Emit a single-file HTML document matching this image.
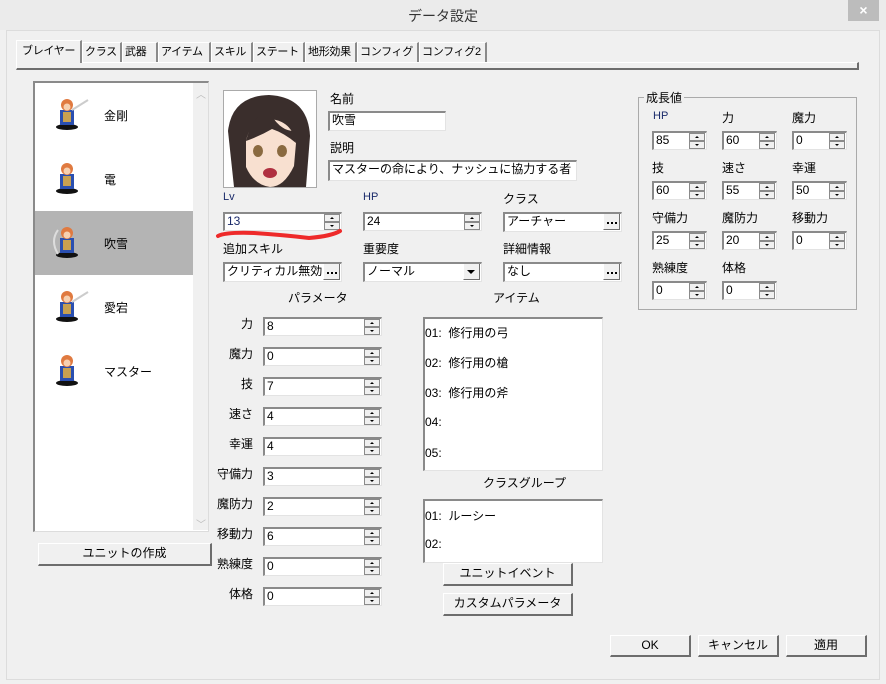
<!DOCTYPE html>
<html><head><meta charset="utf-8">
<style>
*{box-sizing:border-box;margin:0;padding:0}
body{width:886px;height:684px;background:#f0f0f0;position:relative;overflow:hidden;font-family:"Liberation Sans","Noto Sans CJK JP",sans-serif;font-size:12px;color:#000}
.a{position:absolute;white-space:nowrap}
.in{position:absolute;background:#fff;border-top:2px solid #8a8a8a;border-left:2px solid #8a8a8a;border-right:1px solid #e3e3e3;border-bottom:1px solid #e3e3e3;font-size:12px;line-height:15px;padding-left:2px;height:19px;white-space:nowrap;overflow:hidden}
.sp{position:absolute;right:1px;top:0;width:16px;height:16px}
.sp i{display:block;height:8px;border:1px solid #8a8a8a;background:#f0f0f0;position:relative}
.sp i:after{content:"";position:absolute;left:5px;top:2px;border-left:2px solid transparent;border-right:2px solid transparent}
.sp i.u:after{border-bottom:2px solid #000}
.sp i.d:after{border-top:2px solid #000}
.dot{position:absolute;right:1px;top:0;width:17px;height:16px;background:#f0f0f0;border-right:1px solid #6d6d6d;border-bottom:1px solid #6d6d6d;border-left:1px solid #fff;font-size:9px;line-height:15px;text-align:center}
.btn{position:absolute;background:#f0f0f0;border-top:1px solid #fff;border-left:1px solid #fff;border-right:2px solid #6d6d6d;border-bottom:2px solid #6d6d6d;text-align:center;font-size:12px;line-height:19px;white-space:nowrap}
.tab{position:absolute;top:42px;height:20px;border-top:1px solid #fff;border-left:1px solid #fff;border-right:2px solid #8a8a8a;font-size:11px;line-height:18px;padding-left:2px;white-space:nowrap;overflow:hidden;letter-spacing:-0.3px}
.lbl{position:absolute;font-size:12px;text-align:right;width:40px}
.hl{color:#1a2a6a}
</style></head><body>
<div class="a" style="left:0;top:0;width:886px;height:30px;background:#ebebeb"></div>
<div class="a" style="left:0;top:15px;width:886px;text-align:center;font-size:14px;line-height:2px;color:#333">データ設定</div>
<div class="a" style="left:848px;top:0;width:31px;height:21px;background:#bcbcbc;color:#fff;font-size:14px;text-align:center;line-height:21px;font-weight:bold">×</div>
<div class="a" style="left:6px;top:30px;width:874px;height:650px;border:1px solid #dcdcdc"></div>

<!-- tabs -->
<div class="a" style="left:16px;top:62px;width:843px;height:8px;border-top:1px solid #fff;border-bottom:2px solid #6d6d6d;border-right:2px solid #6d6d6d;border-left:1px solid #fff"></div>
<div class="tab" style="left:16px;top:40px;height:23px;width:66px;background:#f0f0f0;line-height:20px;padding-left:5px">ブレイヤー</div>
<div class="tab" style="left:82px;width:40px">クラス</div>
<div class="tab" style="left:122px;width:36px">武器</div>
<div class="tab" style="left:158px;width:53px">アイテム</div>
<div class="tab" style="left:211px;width:42px">スキル</div>
<div class="tab" style="left:253px;width:52px">ステート</div>
<div class="tab" style="left:305px;width:52px">地形効果</div>
<div class="tab" style="left:357px;width:62px">コンフィグ</div>
<div class="tab" style="left:419px;width:68px">コンフィグ2</div>

<!-- list -->
<div class="a" style="left:33px;top:81px;width:176px;height:451px;background:#fff;border-top:2px solid #8a8a8a;border-left:2px solid #8a8a8a;border-right:1px solid #dcdcdc;border-bottom:1px solid #dcdcdc"></div>
<div class="a" style="left:193px;top:83px;width:15px;height:447px;background:#f0f0f0"></div>
<div class="a" style="left:196px;top:86px;color:#bbb;font-size:10px">︿</div>
<div class="a" style="left:196px;top:516px;color:#bbb;font-size:10px">﹀</div>
<div class="a" style="left:35px;top:211px;width:158px;height:64px;background:#b4b4b4"></div>
<svg class="a" style="left:50px;top:96px" width="40" height="300" viewBox="0 0 40 300">
<g id="s"><ellipse cx="17" cy="31" rx="11" ry="3" fill="#111"/><rect x="10" y="14" width="14" height="15" fill="#2a4fb0"/><rect x="13" y="16" width="8" height="10" fill="#c8a050"/><circle cx="17" cy="9" r="6" fill="#e07a40"/><circle cx="17" cy="11" r="3.5" fill="#f6d0b0"/></g>
<line x1="22" y1="14" x2="38" y2="4" stroke="#ccc" stroke-width="2"/>
<use href="#s" y="64"/><use href="#s" y="128"/><use href="#s" y="192"/><use href="#s" y="256"/>
<path d="M8 134 Q0 145 8 158" stroke="#ddd" stroke-width="2" fill="none"/>
<line x1="22" y1="206" x2="38" y2="196" stroke="#ccc" stroke-width="2"/>
</svg>
<div class="a" style="left:104px;top:107px">金剛</div>
<div class="a" style="left:104px;top:171px">電</div>
<div class="a" style="left:104px;top:235px">吹雪</div>
<div class="a" style="left:104px;top:299px">愛宕</div>
<div class="a" style="left:104px;top:363px">マスター</div>
<div class="btn" style="left:38px;top:543px;width:174px;height:23px">ユニットの作成</div>

<!-- portrait -->
<div class="a" style="left:223px;top:90px;width:94px;height:98px;border:1px solid #aaa;background:#fff;overflow:hidden">
<svg width="92" height="96" viewBox="0 0 92 96"><path d="M10 96 L4 40 Q8 5 45 4 Q84 6 86 45 L82 96 Z" fill="#3a2e2c"/><path d="M22 50 Q26 30 46 28 Q68 30 72 52 L70 75 Q60 96 46 96 Q30 94 22 76 Z" fill="#f8e0d0"/><ellipse cx="34" cy="60" rx="5" ry="6" fill="#8a6a40"/><ellipse cx="58" cy="60" rx="5" ry="6" fill="#8a6a40"/><ellipse cx="46" cy="82" rx="7" ry="5" fill="#b03040"/><path d="M22 50 Q30 20 46 22 Q56 40 70 40 L72 52 Q60 42 48 38 Q36 45 22 50Z" fill="#3a2e2c"/></svg></div>
<div class="a" style="left:330px;top:90px">名前</div>
<div class="in" style="left:328px;top:111px;width:118px;height:20px">吹雪</div>
<div class="a" style="left:330px;top:139px">説明</div>
<div class="in" style="left:328px;top:160px;width:249px;height:21px">マスターの命により、ナッシュに協力する者</div>

<div class="a hl" style="left:223px;top:191px;font-size:11px">Lv</div>
<div class="in" style="left:223px;top:212px;width:119px;color:#1a2a6a">13<div class="sp"><i class="u"></i><i class="d"></i></div></div>
<div class="a hl" style="left:363px;top:191px;font-size:11px">HP</div>
<div class="in" style="left:363px;top:212px;width:119px">24<div class="sp"><i class="u"></i><i class="d"></i></div></div>
<div class="a" style="left:503px;top:190px">クラス</div>
<div class="in" style="left:503px;top:212px;width:119px;height:20px">アーチャー<div class="dot"><svg width="13" height="14"><rect x="2" y="8" width="2" height="2"/><rect x="6" y="8" width="2" height="2"/><rect x="10" y="8" width="2" height="2"/></svg></div></div>
<svg class="a" style="left:214px;top:226px" width="132" height="16"><path d="M4 10 Q12 6 40 7 Q70 9 95 12 Q118 10 126 5" stroke="#ee2a2a" stroke-width="4" fill="none" stroke-linecap="round"/></svg>
<div class="a" style="left:223px;top:240px">追加スキル</div>
<div class="in" style="left:223px;top:262px;width:119px;height:20px">クリティカル無効<div class="dot"><svg width="13" height="14"><rect x="2" y="8" width="2" height="2"/><rect x="6" y="8" width="2" height="2"/><rect x="10" y="8" width="2" height="2"/></svg></div></div>
<div class="a" style="left:363px;top:240px">重要度</div>
<div class="in" style="left:363px;top:262px;width:119px;height:20px">ノーマル<div class="dot"><svg width="13" height="14"><path d="M2 6 L10 6 L6 10Z"/></svg></div></div>
<div class="a" style="left:503px;top:240px">詳細情報</div>
<div class="in" style="left:503px;top:262px;width:119px;height:20px">なし<div class="dot"><svg width="13" height="14"><rect x="2" y="8" width="2" height="2"/><rect x="6" y="8" width="2" height="2"/><rect x="10" y="8" width="2" height="2"/></svg></div></div>

<div class="a" style="left:288px;top:289px">パラメータ</div>
<div class="a" style="left:493px;top:289px">アイテム</div>

<div class="lbl" style="left:213px;top:315px">力</div>
<div class="lbl" style="left:213px;top:345px">魔力</div>
<div class="lbl" style="left:213px;top:375px">技</div>
<div class="lbl" style="left:213px;top:405px">速さ</div>
<div class="lbl" style="left:213px;top:435px">幸運</div>
<div class="lbl" style="left:213px;top:465px">守備力</div>
<div class="lbl" style="left:213px;top:495px">魔防力</div>
<div class="lbl" style="left:213px;top:525px">移動力</div>
<div class="lbl" style="left:213px;top:555px">熟練度</div>
<div class="lbl" style="left:213px;top:585px">体格</div>
<div class="in" style="left:263px;top:317px;width:119px">8<div class="sp"><i class="u"></i><i class="d"></i></div></div>
<div class="in" style="left:263px;top:347px;width:119px">0<div class="sp"><i class="u"></i><i class="d"></i></div></div>
<div class="in" style="left:263px;top:377px;width:119px">7<div class="sp"><i class="u"></i><i class="d"></i></div></div>
<div class="in" style="left:263px;top:407px;width:119px">4<div class="sp"><i class="u"></i><i class="d"></i></div></div>
<div class="in" style="left:263px;top:437px;width:119px">4<div class="sp"><i class="u"></i><i class="d"></i></div></div>
<div class="in" style="left:263px;top:467px;width:119px">3<div class="sp"><i class="u"></i><i class="d"></i></div></div>
<div class="in" style="left:263px;top:497px;width:119px">2<div class="sp"><i class="u"></i><i class="d"></i></div></div>
<div class="in" style="left:263px;top:527px;width:119px">6<div class="sp"><i class="u"></i><i class="d"></i></div></div>
<div class="in" style="left:263px;top:557px;width:119px">0<div class="sp"><i class="u"></i><i class="d"></i></div></div>
<div class="in" style="left:263px;top:587px;width:119px">0<div class="sp"><i class="u"></i><i class="d"></i></div></div>

<div class="in" style="left:423px;top:317px;width:180px;height:154px;padding:0"></div>
<div class="a" style="left:425px;top:324px">01:&nbsp; 修行用の弓</div>
<div class="a" style="left:425px;top:354px">02:&nbsp; 修行用の槍</div>
<div class="a" style="left:425px;top:384px">03:&nbsp; 修行用の斧</div>
<div class="a" style="left:425px;top:415px">04:</div>
<div class="a" style="left:425px;top:446px">05:</div>
<div class="a" style="left:483px;top:474px">クラスグループ</div>
<div class="in" style="left:423px;top:499px;width:180px;height:64px;padding:0"></div>
<div class="a" style="left:425px;top:507px">01:&nbsp; ルーシー</div>
<div class="a" style="left:425px;top:537px">02:</div>
<div class="btn" style="left:443px;top:563px;width:130px;height:23px">ユニットイベント</div>
<div class="btn" style="left:443px;top:593px;width:130px;height:23px">カスタムパラメータ</div>

<!-- growth -->
<div class="a" style="left:638px;top:97px;width:219px;height:213px;border:1px solid #aaa"></div>
<div class="a" style="left:644px;top:89px;background:#f0f0f0;padding:0 2px">成長値</div>
<div class="a hl" style="left:653px;top:110px;font-size:11px">HP</div>
<div class="a" style="left:722px;top:109px">力</div>
<div class="a" style="left:792px;top:109px">魔力</div>
<div class="a" style="left:652px;top:159px">技</div>
<div class="a" style="left:722px;top:159px">速さ</div>
<div class="a" style="left:792px;top:159px">幸運</div>
<div class="a" style="left:652px;top:209px">守備力</div>
<div class="a" style="left:722px;top:209px">魔防力</div>
<div class="a" style="left:792px;top:209px">移動力</div>
<div class="a" style="left:652px;top:259px">熟練度</div>
<div class="a" style="left:722px;top:259px">体格</div>
<div class="in" style="left:652px;top:131px;width:55px">85<div class="sp"><i class="u"></i><i class="d"></i></div></div>
<div class="in" style="left:722px;top:131px;width:55px">60<div class="sp"><i class="u"></i><i class="d"></i></div></div>
<div class="in" style="left:792px;top:131px;width:55px">0<div class="sp"><i class="u"></i><i class="d"></i></div></div>
<div class="in" style="left:652px;top:181px;width:55px">60<div class="sp"><i class="u"></i><i class="d"></i></div></div>
<div class="in" style="left:722px;top:181px;width:55px">55<div class="sp"><i class="u"></i><i class="d"></i></div></div>
<div class="in" style="left:792px;top:181px;width:55px">50<div class="sp"><i class="u"></i><i class="d"></i></div></div>
<div class="in" style="left:652px;top:231px;width:55px">25<div class="sp"><i class="u"></i><i class="d"></i></div></div>
<div class="in" style="left:722px;top:231px;width:55px">20<div class="sp"><i class="u"></i><i class="d"></i></div></div>
<div class="in" style="left:792px;top:231px;width:55px">0<div class="sp"><i class="u"></i><i class="d"></i></div></div>
<div class="in" style="left:652px;top:281px;width:55px">0<div class="sp"><i class="u"></i><i class="d"></i></div></div>
<div class="in" style="left:722px;top:281px;width:55px">0<div class="sp"><i class="u"></i><i class="d"></i></div></div>

<div class="btn" style="left:610px;top:635px;width:81px;height:22px">OK</div>
<div class="btn" style="left:698px;top:635px;width:81px;height:22px">キャンセル</div>
<div class="btn" style="left:786px;top:635px;width:81px;height:22px">適用</div>
</body></html>
